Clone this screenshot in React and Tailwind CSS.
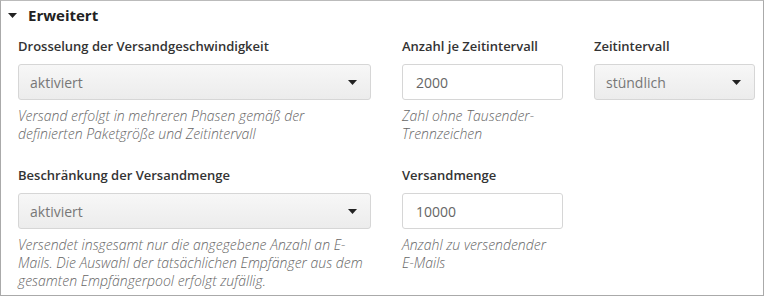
import React from 'react';

const Caret = ({ className = '' }) => (
  <svg width="9" height="5" viewBox="0 0 9 5" className={className}>
    <path d="M0 0h9L4.5 5z" fill="#222" />
  </svg>
);

function Field({ label, children, help }) {
  return (
    <div className="flex flex-col">
      <label className="h-[18px] text-[13px] leading-[18px] font-semibold text-[#333] mb-[9px]">{label}</label>
      {children}
      {help && <p className="mt-[7px] text-[14px] leading-[18px] italic font-light text-[#666] whitespace-nowrap">{help}</p>}
    </div>
  );
}

function Select({ value }) {
  return (
    <div className="h-[36px] flex items-center justify-between pl-[11px] pr-[13px] rounded-[3px] border border-[#d6d6d6] bg-gradient-to-b from-[#f7f7f7] to-[#ececec] text-[14px] text-[#777]">
      <span>{value}</span>
      <Caret />
    </div>
  );
}

function Input({ value }) {
  return (
    <div className="h-[36px] flex items-center pl-[13px] rounded-[3px] border border-[#d6d6d6] bg-white text-[14px] text-[#666]">
      {value}
    </div>
  );
}

export default function App() {
  return (
    <div className="w-[765px] h-[297px] bg-white" style={{ fontFamily: '"Open Sans", sans-serif' }}>
      <div className="w-[764px] h-[296px] border border-[#aaa] border-t-[#bbb]">
        <div className="h-[28px] flex items-center pl-[7px]">
          <Caret />
          <span className="ml-[11px] text-[15px] font-bold text-[#222]">Erweitert</span>
        </div>
        <div className="grid grid-cols-[353px_161px_161px] gap-x-[31px] gap-y-[23px] pl-[17px] pt-[8px]">
          <Field
            label="Drosselung der Versandgeschwindigkeit"
            help={<>Versand erfolgt in mehreren Phasen gemäß der<br />definierten Paketgröße und Zeitintervall</>}
          >
            <Select value="aktiviert" />
          </Field>
          <Field label="Anzahl je Zeitintervall" help={<>Zahl ohne Tausender-<br />Trennzeichen</>}>
            <Input value="2000" />
          </Field>
          <Field label="Zeitintervall">
            <Select value="stündlich" />
          </Field>
          <Field
            label="Beschränkung der Versandmenge"
            help={<>Versendet insgesamt nur die angegebene Anzahl an E-<br />Mails. Die Auswahl der tatsächlichen Empfänger aus dem<br />gesamten Empfängerpool erfolgt zufällig.</>}
          >
            <Select value="aktiviert" />
          </Field>
          <Field label="Versandmenge" help={<>Anzahl zu versendender<br />E-Mails</>}>
            <Input value="10000" />
          </Field>
          <div />
        </div>
      </div>
    </div>
  );
}
